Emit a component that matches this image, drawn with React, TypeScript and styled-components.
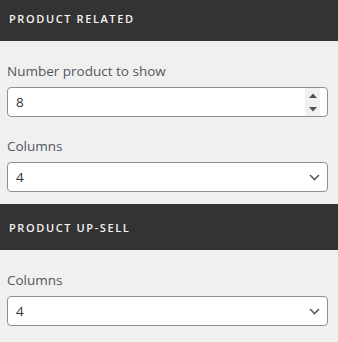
import React from 'react';
import styled, { createGlobalStyle } from 'styled-components';

const GlobalStyle = createGlobalStyle`
  html, body {
    margin: 0;
    padding: 0;
    background: #f0f0f0;
  }
  body {
    font-family: "Open Sans", "Noto Sans", sans-serif;
    overflow: hidden;
  }
`;

// panel is scrolled a few pixels in the capture
const StyledPanel = styled.div`
  margin-top: -5px;
  width: 338px;
  background: #f0f0f0;
`;

const StyledSectionHeader = styled.div`
  height: 46px;
  display: flex;
  align-items: center;
  padding: 0 9px;
  background: #333333;
  color: #f4f4f4;
  font-size: 11px;
  font-weight: 600;
  letter-spacing: 1.6px;
  text-transform: uppercase;
`;

const StyledSectionBody = styled.div`
  display: flex;
  flex-direction: column;
  gap: 19px;
  padding: 20px 10px 12px 7px;
`;

const StyledField = styled.div`
  display: flex;
  flex-direction: column;
`;

const StyledLabel = styled.label`
  font-size: 13.5px;
  line-height: 20px;
  color: #50575e;
  margin-bottom: 6px;
`;

const StyledControlWrap = styled.div`
  position: relative;
  height: 30px;
`;

const StyledNumberInput = styled.input`
  box-sizing: border-box;
  width: 100%;
  height: 30px;
  margin: 0;
  padding: 0 30px 0 8px;
  border: 1px solid #8c8f94;
  border-radius: 4px;
  background: #ffffff;
  font-family: inherit;
  font-size: 13.5px;
  color: #2c3338;
  outline: none;
  -moz-appearance: textfield;

  &::-webkit-inner-spin-button,
  &::-webkit-outer-spin-button {
    -webkit-appearance: none;
    margin: 0;
  }
`;

const StyledSpinner = styled.div`
  position: absolute;
  top: 1px;
  bottom: 1px;
  right: 8px;
  width: 15px;
  display: flex;
  flex-direction: column;
  align-items: center;
  justify-content: space-around;
  background: #f1f1f1;
  pointer-events: none;
`;

const StyledSelect = styled.select`
  box-sizing: border-box;
  width: 100%;
  height: 30px;
  margin: 0;
  padding: 0 30px 0 8px;
  border: 1px solid #8c8f94;
  border-radius: 4px;
  background: #ffffff;
  font-family: inherit;
  font-size: 13.5px;
  color: #2c3338;
  appearance: none;
  -webkit-appearance: none;
  outline: none;
`;

const StyledChevron = styled.svg`
  position: absolute;
  right: 8px;
  top: 12px;
  pointer-events: none;
`;

const Chevron = () => (
  <StyledChevron width="11" height="7" viewBox="0 0 11 7">
    <path d="M1 1 L5.5 5.5 L10 1" fill="none" stroke="#555d66" strokeWidth="1.6" />
  </StyledChevron>
);

const NumberField = ({ label, value }: { label: string; value: number }) => (
  <StyledField>
    <StyledLabel>{label}</StyledLabel>
    <StyledControlWrap>
      <StyledNumberInput type="number" defaultValue={value} />
      <StyledSpinner>
        <svg width="8" height="5" viewBox="0 0 8 5">
          <path d="M0 5 L4 0.5 L8 5 Z" fill="#505050" />
        </svg>
        <svg width="8" height="5" viewBox="0 0 8 5">
          <path d="M0 0 L4 4.5 L8 0 Z" fill="#505050" />
        </svg>
      </StyledSpinner>
    </StyledControlWrap>
  </StyledField>
);

const SelectField = ({ label, value, options }: { label: string; value: string; options: string[] }) => (
  <StyledField>
    <StyledLabel>{label}</StyledLabel>
    <StyledControlWrap>
      <StyledSelect defaultValue={value}>
        {options.map((o) => (
          <option key={o} value={o}>
            {o}
          </option>
        ))}
      </StyledSelect>
      <Chevron />
    </StyledControlWrap>
  </StyledField>
);

const columnOptions = ['1', '2', '3', '4', '5', '6'];

export default function App() {
  return (
    <>
      <GlobalStyle />
      <StyledPanel>
        <StyledSectionHeader>Product Related</StyledSectionHeader>
        <StyledSectionBody>
          <NumberField label="Number product to show" value={8} />
          <SelectField label="Columns" value="4" options={columnOptions} />
        </StyledSectionBody>
        <StyledSectionHeader>Product Up-Sell</StyledSectionHeader>
        <StyledSectionBody>
          <SelectField label="Columns" value="4" options={columnOptions} />
        </StyledSectionBody>
      </StyledPanel>
    </>
  );
}
